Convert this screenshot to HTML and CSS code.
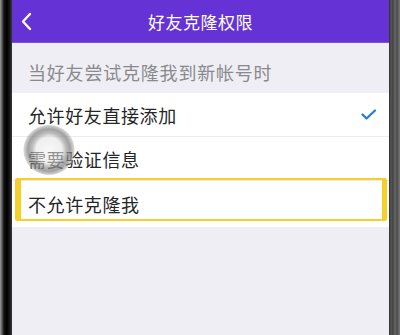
FILE: index.html
```html
<!DOCTYPE html>
<html lang="zh">
<head>
<meta charset="utf-8">
<link rel="stylesheet" href="styles.css">
</head>
<body>
<div class="device">
  <div class="bezel-left"></div>
  <div class="screen">
    <div class="navbar">
      <svg class="back" width="14" height="20" viewBox="0 0 14 20"><polyline points="10,3 3,10.5 10,18" fill="none" stroke="#fff" stroke-width="2.4" stroke-linecap="round" stroke-linejoin="round"/></svg>
      <div class="title">好友克隆权限</div>
    </div>
    <div class="section-head">当好友尝试克隆我到新帐号时</div>
    <div class="list">
      <div class="row">
        <span class="label">允许好友直接添加</span>
        <svg class="check" width="16" height="12" viewBox="0 0 16 12"><polyline points="1.5,5.5 5.5,9.5 14,1.5" fill="none" stroke="#2379e3" stroke-width="2.2" stroke-linecap="round" stroke-linejoin="round"/></svg>
      </div>
      <div class="row">
        <span class="label">需要验证信息</span>
      </div>
      <div class="row last">
        <span class="label">不允许克隆我</span>
      </div>
      <div class="highlight"></div>
      <div class="touch"></div>
    </div>
    <div class="rest"></div>
  </div>
  <div class="bezel-right"></div>
</div>
</body>
</html>
```
FILE: styles.css
```css
html, body {
  margin: 0;
  padding: 0;
  width: 400px;
  height: 335px;
  overflow: hidden;
  font-family: "Noto Sans CJK SC", "Noto Sans", sans-serif;
}
.device {
  display: flex;
  width: 400px;
  height: 335px;
}
.bezel-left {
  width: 12px;
  background: linear-gradient(to right, #9a9a9a 0px, #5a5a5a 2px, #111 4px, #000 7px, #1a1a1a 10px, #3a3a3a 12px);
}
.bezel-right {
  width: 11px;
  background: linear-gradient(to right, #2e2e2e 0px, #555 2px, #444 4px, #6a6a6a 6px, #4a4a4a 8px, #7a7a7a 11px);
}
.screen {
  flex: 1;
  display: flex;
  flex-direction: column;
  background: #efeef4;
}
.navbar {
  position: relative;
  height: 43px;
  background: #6532d5;
  display: flex;
  align-items: center;
  justify-content: center;
  border-bottom: 1px solid #7a55d8;
  box-sizing: border-box;
}
.back {
  position: absolute;
  left: 8px;
  top: 11px;
}
.title {
  color: #fff;
  font-size: 17px;
  letter-spacing: 0.5px;
}
.section-head {
  height: 50px;
  box-sizing: border-box;
  padding: 16px 0 0 16px;
  color: #8a8a8e;
  font-size: 18px;
  letter-spacing: 0.8px;
  line-height: 26px;
}
.list {
  position: relative;
  background: #fff;
}
.row {
  height: 44px;
  display: flex;
  align-items: center;
  justify-content: space-between;
  padding: 0 12px 0 16px;
  border-bottom: 1px solid #ececf0;
  box-sizing: border-box;
}
.row.last {
  height: 46px;
  border-bottom: none;
}
.label {
  color: #262626;
  font-size: 18px;
  letter-spacing: 0.6px;
}
.highlight {
  position: absolute;
  left: 3px;
  top: 85px;
  width: 372px;
  height: 43px;
  box-sizing: border-box;
  border-style: solid;
  border-color: #f7cf2a;
  border-width: 2px 5px 2px 6px;
  border-radius: 2px;
}
.touch {
  position: absolute;
  left: 11px;
  top: 32px;
  width: 52px;
  height: 50px;
  border-radius: 50%;
  background: radial-gradient(circle, rgba(240,240,240,0.5) 0px, rgba(228,228,228,0.6) 13px, rgba(160,160,160,0.7) 17px, rgba(125,125,125,0.72) 21px, rgba(175,175,175,0.5) 25px, rgba(200,200,200,0) 26px);
}
.rest {
  flex: 1;
}
```
